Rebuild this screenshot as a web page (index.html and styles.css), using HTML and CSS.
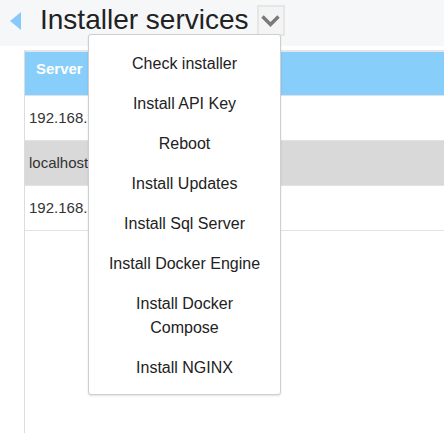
FILE: index.html
```html
<!DOCTYPE html>
<html>
<head>
<meta charset="utf-8">
<link rel="stylesheet" href="styles.css">
</head>
<body>
<div class="header">
  <span class="back"></span>
  <h1 class="title">Installer services</h1>
  <span class="toggle">
    <svg width="24" height="27" viewBox="0 0 24 27"><polyline points="3.5,9.5 11.5,17.5 19.5,9.5" fill="none" stroke="#7a7a7a" stroke-width="3.4"/></svg>
  </span>
</div>
<div class="panel">
  <table class="grid">
    <thead>
      <tr><th class="c1">Server</th><th></th></tr>
    </thead>
    <tbody>
      <tr><td class="c1">192.168.1.10</td><td></td></tr>
      <tr class="sel"><td class="c1">localhost</td><td></td></tr>
      <tr><td class="c1">192.168.1.12</td><td></td></tr>
    </tbody>
  </table>
</div>
<div class="menu">
  <div class="item">Check installer</div>
  <div class="item">Install API Key</div>
  <div class="item">Reboot</div>
  <div class="item">Install Updates</div>
  <div class="item">Install Sql Server</div>
  <div class="item">Install Docker Engine</div>
  <div class="item">Install Docker<br>Compose</div>
  <div class="item">Install NGINX</div>
</div>
</body>
</html>
```

FILE: styles.css
```css
html, body {
  margin: 0;
  padding: 0;
  background: #ffffff;
  font-family: "Liberation Sans", Arial, sans-serif;
  overflow: hidden;
}
.header {
  height: 46px;
  background: #f6f7f9;
  display: flex;
  align-items: flex-start;
  padding-left: 10px;
  box-sizing: border-box;
}
.back {
  width: 0;
  height: 0;
  margin-top: 12px;
  border-right: 11px solid #87cafa;
  border-top: 9px solid transparent;
  border-bottom: 9px solid transparent;
}
.title {
  margin: 4px 0 0 19px;
  font-size: 28px;
  line-height: 32px;
  font-weight: normal;
  color: #222;
}
.toggle {
  margin: 5px 0 0 8px;
  width: 24px;
  height: 27px;
  border: 2px solid #e6e6e6;
  background: #f4f4f4;
  display: block;
}
.toggle svg { display: block; }
.panel {
  margin: 4px 0 0 24px;
  height: 383px;
  border-left: 1px solid #d9dce1;
  overflow: hidden;
}
.grid {
  width: 440px;
  border-collapse: collapse;
  table-layout: fixed;
  border-top: 2px solid #e3e5e8;
}
.grid th, .grid td {
  padding: 0;
  white-space: nowrap;
  font-size: 15px;
  color: #333;
  text-align: left;
  border-bottom: 1px solid #dfe2e6;
}
.grid .c1 { width: 100px; }
.grid th {
  height: 33px;
  padding: 0 0 10px 11px;
  background: #87cefa;
  color: #fff;
  font-weight: bold;
}
.grid td {
  height: 42px;
  padding: 0 0 2px 4px;
}
.grid tr.sel td { background: #d9d9d9; }
.menu {
  position: absolute;
  left: 88px;
  top: 34px;
  width: 193px;
  height: 361px;
  box-sizing: border-box;
  background: #fff;
  border: 1px solid #cfcfcf;
  border-radius: 3px;
  box-shadow: 0 1px 2px rgba(0,0,0,0.12);
  padding-top: 9px;
}
.item {
  font-size: 16px;
  line-height: 24px;
  padding: 8px 4px;
  text-align: center;
  color: #222;
}
```
